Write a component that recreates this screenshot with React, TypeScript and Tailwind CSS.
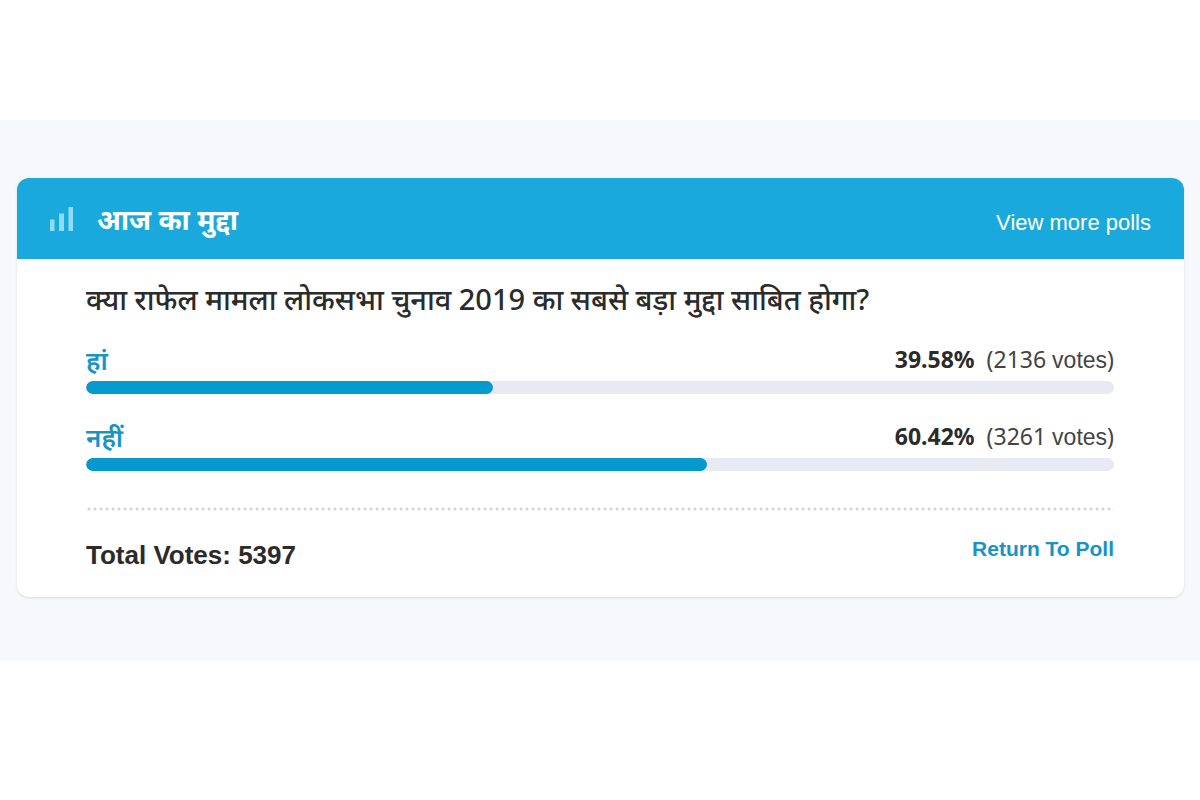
import React from 'react';

interface Option {
  label: string;
  percent: number;
  votes: number;
}

const options: Option[] = [
  { label: 'हां', percent: 39.58, votes: 2136 },
  { label: 'नहीं', percent: 60.42, votes: 3261 },
];

const BarsIcon: React.FC = () => (
  <svg className="w-6 h-6" viewBox="0 0 24 24" fill="#8fdcf8" aria-hidden="true">
    <rect x="1" y="12.5" width="4.5" height="11.5" />
    <rect x="10" y="6.5" width="5" height="17.5" />
    <rect x="19.5" y="0" width="4.5" height="24" />
  </svg>
);

const PollOption: React.FC<{ option: Option }> = ({ option }) => (
  <li>
    <div className="flex items-start justify-between h-10">
      <span className="text-[26px] leading-[38px] font-semibold text-[#1694c6]">{option.label}</span>
      <span className="flex items-baseline gap-3 text-[23px] leading-9 text-[#444]">
        <strong className="font-bold text-[#2b2b2b]">{option.percent}%</strong>
        <span>
          ({option.votes} <span className="font-['Liberation_Sans',sans-serif]">votes</span>)
        </span>
      </span>
    </div>
    <div className="h-[13px] rounded-full bg-[#e8e9f3] overflow-hidden">
      <div className="h-full rounded-full bg-[#0599cd]" style={{ width: `${option.percent}%` }} />
    </div>
  </li>
);

export default function App() {
  const total = options.reduce((sum, option) => sum + option.votes, 0);

  return (
    <div className="bg-white py-30 font-['Noto_Sans',sans-serif]">
      <main className="bg-[#f7f8fb] pl-[17px] pr-4 pt-[58px] pb-16">
        <section className="bg-white rounded-xl overflow-hidden shadow-sm">
          <header className="flex items-center justify-between h-[81px] pl-8 pr-[33px] bg-[#1aa9dc] text-white">
            <div className="flex items-center gap-6">
              <BarsIcon />
              <h1 className="text-[28px] leading-10 font-bold">आज का मुद्दा</h1>
            </div>
            <a href="#polls" className="pt-2 font-['Liberation_Sans',sans-serif] text-[22px]">View more polls</a>
          </header>
          <div className="pl-[69px] pr-[70px] pt-5 pb-6">
            <h2 className="text-[29px] leading-10 font-medium text-[#2b2b2b]">
              क्या राफेल मामला लोकसभा चुनाव 2019 का सबसे बड़ा मुद्दा साबित होगा?
            </h2>
            <ul className="flex flex-col gap-6 mt-[22px]">
              {options.map(option => (
                <PollOption key={option.label} option={option} />
              ))}
            </ul>
            <hr className="mt-9 h-1 border-0 bg-[radial-gradient(circle,#d6d6d8_1px,transparent_2px)] bg-[length:6px_4px]" />
            <div className="flex items-start justify-between pt-[22px] font-['Liberation_Sans',sans-serif] font-bold">
              <p className="pt-1 text-[26px] leading-9 text-[#2b2b2b]">Total Votes: {total}</p>
              <a href="#poll" className="text-[21px] leading-8 text-[#1694c6]">Return To Poll</a>
            </div>
          </div>
        </section>
      </main>
    </div>
  );
}
